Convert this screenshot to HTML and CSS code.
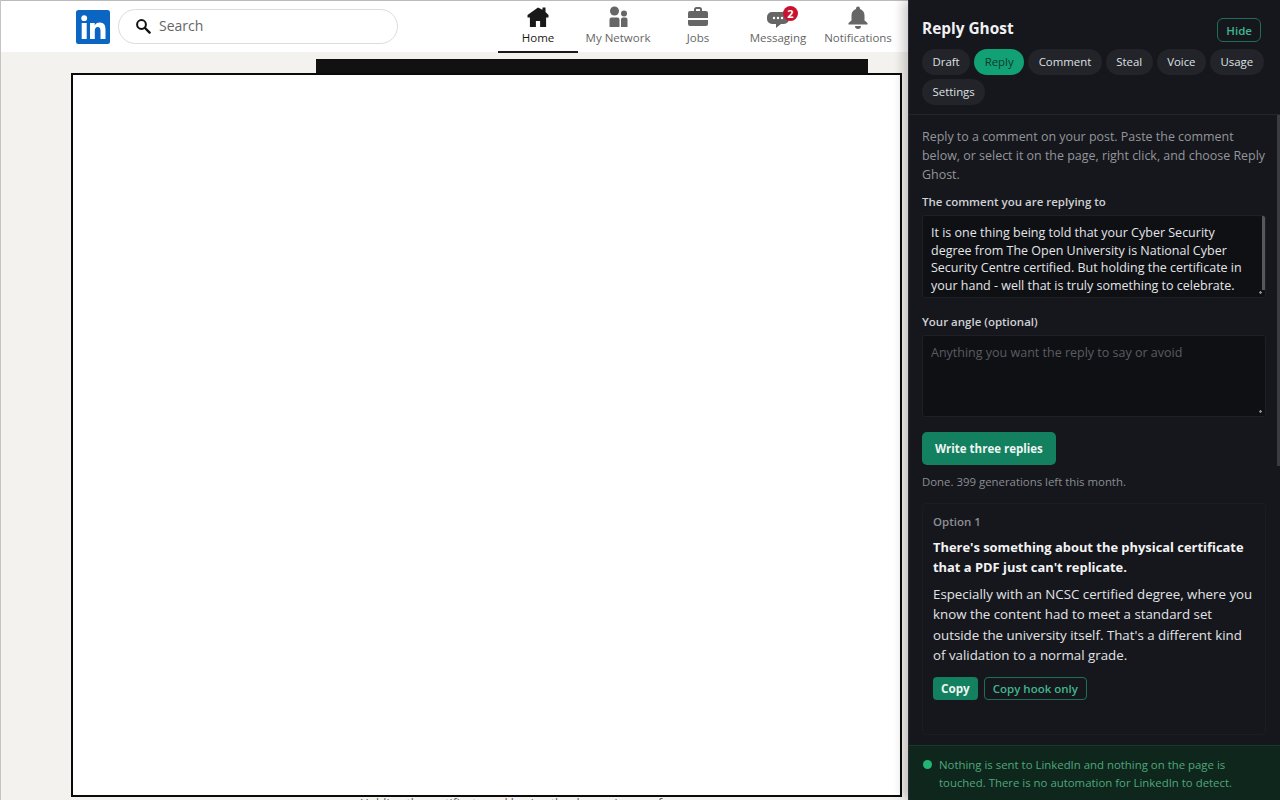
FILE: index.html
```html
<!DOCTYPE html>
<html lang="en">
  <head>
    <meta charset="UTF-8" />
    <title>Reply Ghost</title>
    <link rel="stylesheet" href="styles.css">
  </head>
  <body>
    <div class="site">
      <header class="topbar">
        <svg class="logo" viewBox="0 0 34 34" width="34" height="34">
          <rect width="34" height="34" rx="2.5" fill="#0a66c2"/>
          <circle cx="8.2" cy="8.2" r="2.9" fill="#fff"/>
          <rect x="5.7" y="13" width="5" height="16" fill="#fff"/>
          <path d="M14 13h4.7v2.3c.8-1.5 2.6-2.7 5-2.7 4.6 0 5.8 2.9 5.8 7.2V29h-5v-8c0-2.3-.5-4-2.7-4-2.4 0-3 1.8-3 4v8H14z" fill="#fff"/>
        </svg>
        <div class="search">
          <svg viewBox="0 0 16 16" width="16" height="16">
            <circle cx="6.5" cy="6.5" r="4.4" fill="none" stroke="#111" stroke-width="2"/>
            <path d="M10 10l4.6 4.6" stroke="#111" stroke-width="2.4" stroke-linecap="round"/>
          </svg>
          <span>Search</span>
        </div>
        <nav class="nav">
          <a class="nav-item active">
            <svg viewBox="0 0 24 24" width="24" height="24"><path d="M12 2.5 1.5 10v2.5h2.4V22h6v-6h4.2v6h6v-9.500h2.400V10L19.500 7V2.500h-3v2.300z" fill="#191919"/></svg>
            <span>Home</span>
          </a>
          <a class="nav-item">
            <svg viewBox="0 0 24 24" width="24" height="24"><circle cx="8.500" cy="6" r="4.500"/><circle cx="18" cy="8.500" r="3"/><path d="M3.500 14.500a2 2 0 0 1 2-2h6a2 2 0 0 1 2 2V22h-10zM15 14.500a2 2 0 0 1 2-2h2.500a2 2 0 0 1 2 2V22H15z"/></svg>
            <span>My Network</span>
          </a>
          <a class="nav-item">
            <svg viewBox="0 0 24 24" width="24" height="24"><path d="M8 6V4.500A2.500 2.500 0 0 1 10.500 2h3A2.500 2.500 0 0 1 16 4.500V6h4a2 2 0 0 1 2 2v5H2V8a2 2 0 0 1 2-2zm2 0h4V4.500a.5.5 0 0 0-.5-.5h-3a.5.5 0 0 0-.5.5zM2 15h20v4a2 2 0 0 1-2 2H4a2 2 0 0 1-2-2z"/></svg>
            <span>Jobs</span>
          </a>
          <a class="nav-item">
            <span class="msg-icon">
              <svg viewBox="0 0 24 24" width="24" height="24"><path d="M6 7h12a5 5 0 0 1 5 5v2a5 5 0 0 1-5 5h-3l-5 4v-4H6a5 5 0 0 1-5-5v-2a5 5 0 0 1 5-5z"/><circle cx="8" cy="13" r="1.200" fill="#fff"/><circle cx="12" cy="13" r="1.200" fill="#fff"/><circle cx="16" cy="13" r="1.200" fill="#fff"/></svg>
              <b class="badge">2</b>
            </span>
            <span>Messaging</span>
          </a>
          <a class="nav-item">
            <svg viewBox="0 0 24 24" width="24" height="24"><path d="M12 1.500a2 2 0 0 1 2 2v.6c2.900.9 4.500 3.400 4.500 6.400v5l3 2.500v1.500h-19V18l3-2.500v-5c0-3 1.600-5.500 4.500-6.400v-.6a2 2 0 0 1 2-2zM9 21h6a3 3 0 0 1-6 0z"/></svg>
            <span>Notifications</span>
          </a>
        </nav>
      </header>
      <div class="feed">
        <div class="post-bar"></div>
      </div>
      <div class="white-sheet"></div>
      <p class="cut-text">Holding the certificate and having the degree is one of</p>
    </div>

    <aside class="panel">
      <div class="panel-head">
        <div class="title-row">
          <h1>Reply Ghost</h1>
          <button class="outline hide">Hide</button>
        </div>
        <div class="tabs">
          <span class="tab">Draft</span>
          <span class="tab on">Reply</span>
          <span class="tab">Comment</span>
          <span class="tab">Steal</span>
          <span class="tab">Voice</span>
          <span class="tab">Usage</span>
          <span class="tab">Settings</span>
        </div>
      </div>
      <div class="panel-body">
        <p class="hint">Reply to a comment on your post. Paste the comment below, or select it on the page, right click, and choose Reply Ghost.</p>
        <label class="field-label" for="comment">The comment you are replying to</label>
        <textarea id="comment" class="box filled">It is one thing being told that your Cyber Security degree from The Open University is National Cyber Security Centre certified. But holding the certificate in your hand - well that is truly something to celebrate.</textarea>
        <label class="field-label" for="angle">Your angle (optional)</label>
        <textarea id="angle" class="box empty" placeholder="Anything you want the reply to say or avoid"></textarea>
        <button class="primary">Write three replies</button>
        <p class="status">Done. 399 generations left this month.</p>
        <div class="option">
          <div class="option-num">Option 1</div>
          <div class="option-hook">There's something about the physical certificate that a PDF just can't replicate.</div>
          <div class="option-text">Especially with an NCSC certified degree, where you know the content had to meet a standard set outside the university itself. That's a different kind of validation to a normal grade.</div>
          <div class="option-actions">
            <button class="copy">Copy</button>
            <button class="outline">Copy hook only</button>
          </div>
        </div>
        <div class="scrollbar"></div>
      </div>
      <div class="panel-foot">
        <i class="dot"></i>
        <p>Nothing is sent to LinkedIn and nothing on the page is touched. There is no automation for LinkedIn to detect.</p>
      </div>
    </aside>
  </body>
</html>
```

FILE: styles.css
```css
html, body {
  margin: 0;
  height: 100%;
  overflow: hidden;
}
body {
  display: flex;
  font-family: "Open Sans", "Noto Sans", Arial, sans-serif;
}
.site {
  position: relative;
  width: 908px;
  height: 800px;
  box-sizing: border-box;
  background: #f4f2ee;
  border-left: 1px solid #c4c4c4;
  overflow: hidden;
}
.topbar {
  height: 52px;
  box-sizing: border-box;
  padding: 1px 0 0 75px;
  background: #fff;
  border-top: 1px solid #bbb;
  display: flex;
  align-items: flex-start;
}
.logo {
  margin-top: 8px;
}
.search {
  width: 280px;
  height: 35px;
  margin: 7px 0 0 8px;
  box-sizing: border-box;
  border: 1px solid #dcdcdc;
  border-radius: 18px;
  display: flex;
  align-items: center;
  gap: 8px;
  padding: 0 0 2px 16px;
  font-size: 14px;
  color: #666;
}
.nav {
  display: flex;
  margin-left: 100px;
}
.nav-item {
  width: 80px;
  height: 51px;
  box-sizing: border-box;
  padding-top: 3px;
  display: flex;
  flex-direction: column;
  align-items: center;
  font-size: 11.500px;
  line-height: 18px;
  color: #666;
  white-space: nowrap;
}
.nav-item svg {
  fill: #666;
  display: block;
}
.nav-item.active {
  color: #191919;
  border-bottom: 2px solid #191919;
}
.msg-icon {
  position: relative;
  height: 24px;
}
.badge {
  position: absolute;
  top: 1px;
  right: -8px;
  width: 15px;
  height: 15px;
  border-radius: 50%;
  background: #cb112d;
  color: #fff;
  font-size: 11px;
  line-height: 15px;
  text-align: center;
}
.feed {
  padding-top: 7px;
}
.post-bar {
  width: 552px;
  height: 18px;
  margin-left: 315px;
  background: #111;
}
.white-sheet {
  position: absolute;
  left: 70px;
  top: 73px;
  width: 831px;
  height: 724px;
  box-sizing: border-box;
  background: #fff;
  border: 2px solid #0a0a0a;
}
.cut-text {
  position: absolute;
  left: 359px;
  top: 795px;
  margin: 0;
  font-size: 12px;
  color: #555;
  white-space: nowrap;
}
.panel {
  position: relative;
  width: 372px;
  height: 800px;
  background: #15171c;
  border-left: 1px solid #2a2c31;
  box-shadow: -5px 0 10px rgba(0, 0, 0, 0.2);
  box-sizing: border-box;
  display: flex;
  flex-direction: column;
  color: #d9dade;
  font-size: 12px;
}
.panel-head {
  height: 115px;
  flex: none;
  box-sizing: border-box;
  padding: 16px 13px 0;
  border-bottom: 1px solid #24262b;
}
.title-row {
  display: flex;
  justify-content: space-between;
  align-items: flex-start;
  height: 26px;
  padding-right: 6px;
}
h1 {
  margin: 0;
  font-size: 15.400px;
  line-height: 25px;
  font-weight: 700;
  color: #f1f1f3;
}
button {
  font-family: inherit;
}
.outline {
  background: transparent;
  border: 1px solid #1f6f58;
  border-radius: 4px;
  color: #3fb68e;
  font-size: 11.500px;
  font-weight: 600;
  padding: 0 8px;
  height: 23px;
}
.hide {
  height: 24px;
  margin-top: 2px;
  border-radius: 6px;
}
.tabs {
  display: flex;
  flex-wrap: wrap;
  gap: 4px;
  margin-top: 7px;
}
.tab {
  height: 26px;
  line-height: 26px;
  padding: 0 10.500px;
  border-radius: 13px;
  background: #22242a;
  color: #dfe0e3;
  font-size: 11.400px;
}
.tab.on {
  background: #12a174;
  color: #0d3a2d;
}
.panel-body {
  position: relative;
  flex: 1;
  overflow: hidden;
  padding: 12px 14px 0 13px;
}
.hint {
  margin: 0 0 10px;
  font-size: 12.450px;
  line-height: 19px;
  color: #94959b;
}
.field-label {
  display: block;
  margin-bottom: 5px;
  font-size: 11.500px;
  font-weight: 600;
  line-height: 16px;
  color: #d0d1d5;
}
.box {
  display: block;
  width: 100%;
  box-sizing: border-box;
  background: #0e1014;
  border: 1px solid #1e2025;
  border-radius: 3px;
  padding: 8px;
  font-family: inherit;
  font-size: 12.500px;
  line-height: 17.500px;
  outline: none;
}
.box::placeholder {
  color: #5a5c62;
}
.box::-webkit-resizer {
  background: radial-gradient(circle at 70% 70%, #8a8c90 0 1px, transparent 1.5px);
}
.box.filled {
  height: 83px;
  margin-bottom: 16px;
  padding-right: 20px;
  color: #e4e5e8;
  overflow: hidden;
  /* the field's thin scrollbar */
  background: linear-gradient(#55575c, #55575c) right 0 top 0 / 3px 74px no-repeat, #0e1014;
}
.box.empty {
  height: 82px;
  margin-bottom: 15px;
}
.primary {
  display: block;
  height: 33px;
  padding: 0 13px;
  border: none;
  border-radius: 5px;
  background: #13805f;
  color: #f0f5f3;
  font-size: 11.500px;
  font-weight: 700;
}
.status {
  margin: 9px 0 13px;
  font-size: 11.400px;
  line-height: 16px;
  color: #8c8d93;
}
.option {
  height: 232px;
  box-sizing: border-box;
  padding: 10px;
  border: 1px solid #1b1d22;
  border-radius: 4px;
}
.option-num {
  font-size: 11.500px;
  font-weight: 600;
  color: #8d8e94;
  line-height: 16px;
}
.option-hook {
  margin-top: 7px;
  font-size: 12.900px;
  font-weight: 700;
  line-height: 20px;
  color: #f3f3f5;
}
.option-text {
  margin-top: 7px;
  font-size: 13.300px;
  line-height: 20.400px;
  color: #e2e3e6;
}
.option-actions {
  display: flex;
  gap: 6px;
  margin-top: 11px;
}
.copy {
  height: 23px;
  padding: 0 8px;
  border: none;
  border-radius: 4px;
  background: #13805f;
  color: #eef5f2;
  font-size: 11.700px;
  font-weight: 700;
}
.scrollbar {
  position: absolute;
  top: 0;
  right: 0;
  width: 3px;
  height: 351px;
  background: #3a3c42;
}
.panel-foot {
  height: 55px;
  flex: none;
  box-sizing: border-box;
  padding: 10px 30px 0 14px;
  background: #0e261b;
  border-top: 1px solid #17392a;
  display: flex;
  gap: 8px;
  font-size: 11.400px;
  line-height: 18px;
  color: #4fa67f;
}
.panel-foot p {
  margin: 0;
}
.dot {
  flex: none;
  width: 9px;
  height: 9px;
  margin-top: 4px;
  margin-right: -1px;
  border-radius: 50%;
  background: #22b573;
}
```
